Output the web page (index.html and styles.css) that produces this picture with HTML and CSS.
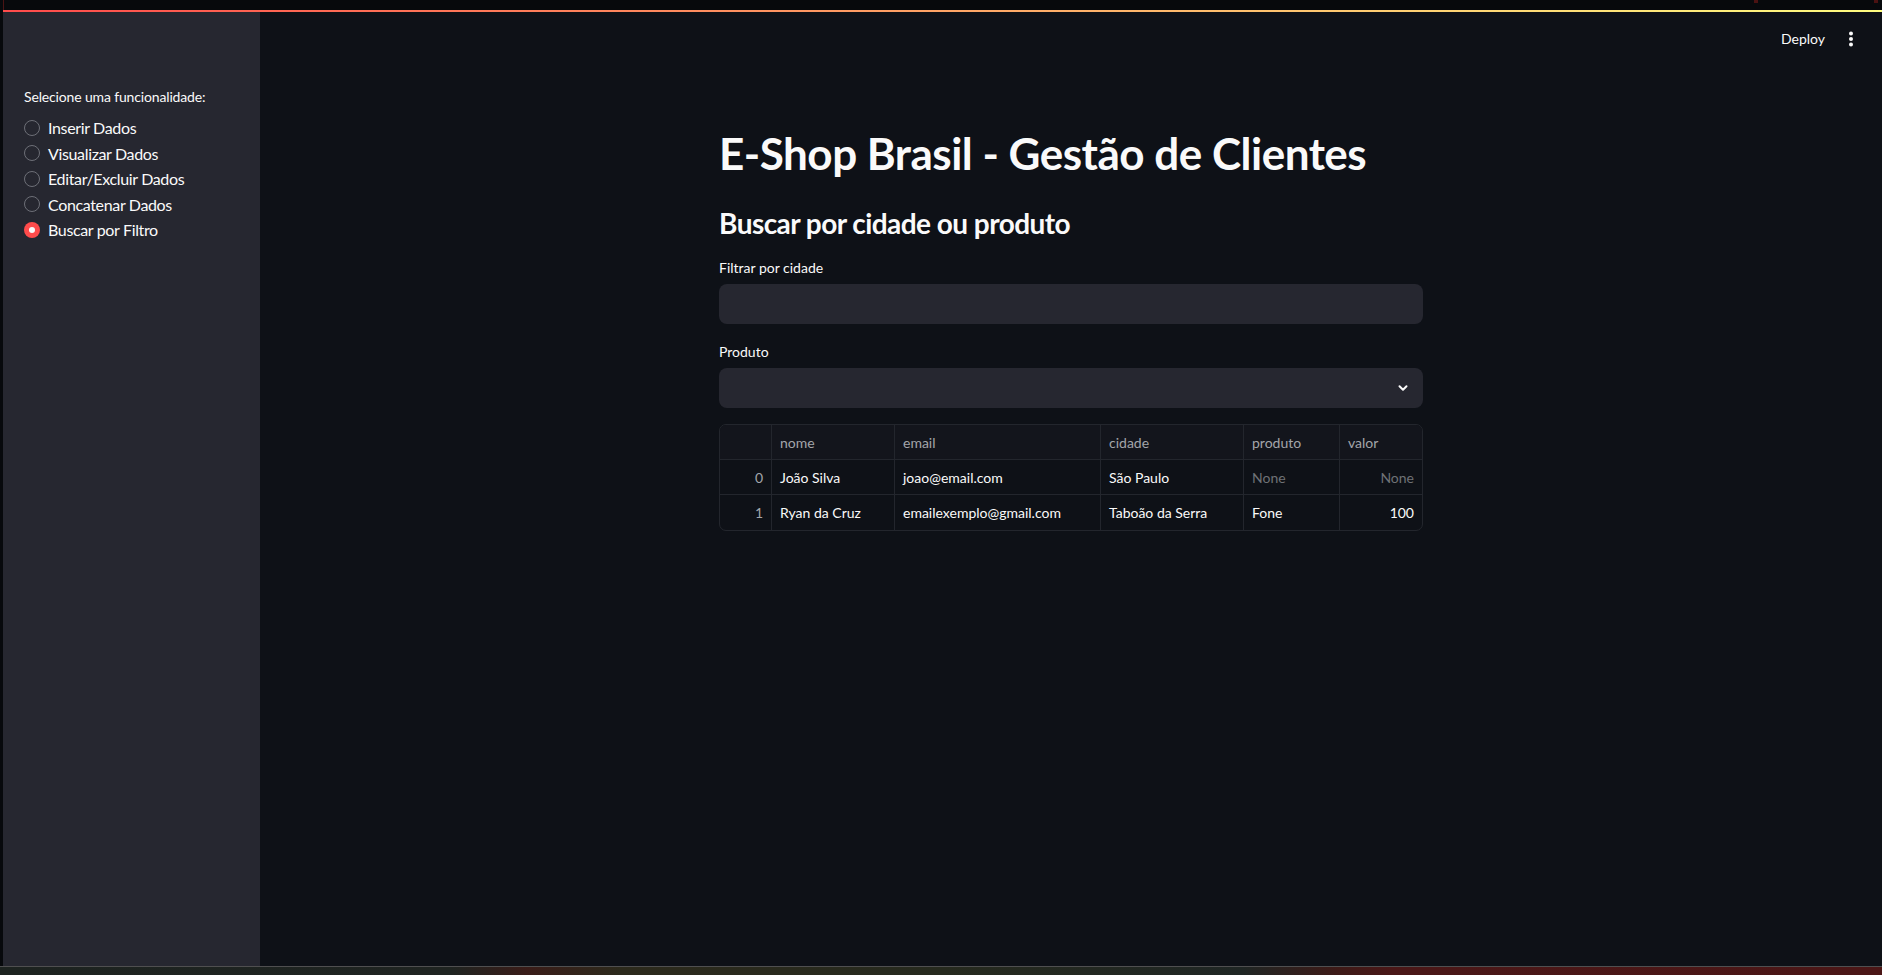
FILE: index.html
```html
<!DOCTYPE html>
<html lang="pt-BR">
<head>
<meta charset="utf-8">
<title>E-Shop Brasil - Gestão de Clientes</title>
<link rel="stylesheet" href="styles.css">
</head>
<body>
<div class="screen">
  <div class="topstrip">
    <span class="mark mark-edge"></span>
    <span class="mark mark-a"></span>
    <span class="mark mark-b"></span>
  </div>
  <div class="window">
    <div class="edge"></div>
    <div class="app">
      <div class="decoration"></div>
      <div class="appbody">
        <aside class="sidebar">
          <div class="sb-label">Selecione uma funcionalidade:</div>
          <div class="radio-group">
            <div class="radio"><span class="dot"></span><span>Inserir Dados</span></div>
            <div class="radio"><span class="dot"></span><span>Visualizar Dados</span></div>
            <div class="radio"><span class="dot"></span><span>Editar/Excluir Dados</span></div>
            <div class="radio"><span class="dot"></span><span>Concatenar Dados</span></div>
            <div class="radio selected"><span class="dot"></span><span>Buscar por Filtro</span></div>
          </div>
        </aside>
        <main class="main">
          <header class="topbar">
            <span class="deploy">Deploy</span>
            <span class="kebab">
              <svg width="24" height="24" viewBox="0 0 24 24"><circle cx="12" cy="6.5" r="2" fill="#fafafa"/><circle cx="12" cy="12" r="2" fill="#fafafa"/><circle cx="12" cy="17.5" r="2" fill="#fafafa"/></svg>
            </span>
          </header>
          <div class="block">
            <h1 class="title">E-Shop Brasil - Gestão de Clientes</h1>
            <h3 class="subtitle">Buscar por cidade ou produto</h3>
            <div class="field">
              <div class="flabel">Filtrar por cidade</div>
              <div class="input"></div>
            </div>
            <div class="field">
              <div class="flabel">Produto</div>
              <div class="input select">
                <svg width="12" height="12" viewBox="0 0 12 12"><polyline points="2.5,4.2 6,7.7 9.5,4.2" fill="none" stroke="#fafafa" stroke-width="2" stroke-linecap="round" stroke-linejoin="round"/></svg>
              </div>
            </div>
            <div class="table">
              <div class="cell head"></div>
              <div class="cell head">nome</div>
              <div class="cell head">email</div>
              <div class="cell head">cidade</div>
              <div class="cell head">produto</div>
              <div class="cell head last">valor</div>

              <div class="cell idx">0</div>
              <div class="cell">João Silva</div>
              <div class="cell">joao@email.com</div>
              <div class="cell">São Paulo</div>
              <div class="cell none">None</div>
              <div class="cell none num last">None</div>

              <div class="cell idx lastrow">1</div>
              <div class="cell lastrow">Ryan da Cruz</div>
              <div class="cell lastrow">emailexemplo@gmail.com</div>
              <div class="cell lastrow">Taboão da Serra</div>
              <div class="cell lastrow">Fone</div>
              <div class="cell num last lastrow">100</div>
            </div>
          </div>
        </main>
      </div>
    </div>
  </div>
  <div class="taskbar"></div>
</div>
</body>
</html>
```
FILE: styles.css
```css
html, body {
  margin: 0;
  padding: 0;
  background: #07090c;
}
body {
  font-family: "Lato", "Noto Sans", "Liberation Sans", sans-serif;
  color: #fafafa;
}
.screen {
  width: 1882px;
  height: 975px;
  display: flex;
  flex-direction: column;
  overflow: hidden;
}
.topstrip {
  height: 10px;
  flex: none;
  display: flex;
  background: #07090c;
}
.mark {
  display: block;
  height: 3px;
  background: #4a1212;
}
.mark-edge {
  width: 1px;
  height: 10px;
  margin-left: 3px;
  background: #4a1414;
}
.mark-a {
  width: 4px;
  margin-left: 1750px;
}
.mark-b {
  width: 4px;
  margin-left: 116px;
}
.window {
  flex: 1;
  display: flex;
  min-height: 0;
}
.edge {
  width: 3px;
  flex: none;
  background: #07090c;
}
.app {
  flex: 1;
  display: flex;
  flex-direction: column;
  min-width: 0;
}
.decoration {
  height: 2px;
  flex: none;
  background: linear-gradient(90deg, #ff4b4b, #fffd80);
}
.appbody {
  flex: 1;
  display: flex;
  min-height: 0;
}
.sidebar {
  width: 257px;
  flex: none;
  background: #262730;
  padding: 73px 0 0 21px;
  box-sizing: border-box;
}
.sb-label {
  font-size: 14px;
  line-height: 24px;
  height: 24px;
  margin-bottom: 6px;
  letter-spacing: -0.15px;
}
.radio-group {
  display: flex;
  flex-direction: column;
}
.radio {
  display: flex;
  align-items: center;
  gap: 8px;
  height: 25.5px;
  font-size: 16px;
  letter-spacing: -0.35px;
}
.dot {
  width: 16px;
  height: 16px;
  box-sizing: border-box;
  border-radius: 50%;
  border: 1.5px solid #6d6f77;
  flex: none;
  display: flex;
  align-items: center;
  justify-content: center;
}
.radio.selected .dot {
  border: none;
  background: #ff4b4b;
}
.radio.selected .dot::after {
  content: "";
  width: 6px;
  height: 6px;
  border-radius: 50%;
  background: #fafafa;
}
.main {
  flex: 1;
  min-width: 0;
  background: #0e1117;
  display: flex;
  flex-direction: column;
}
.topbar {
  height: 53px;
  flex: none;
  display: flex;
  align-items: center;
  justify-content: flex-end;
  padding-right: 19px;
  gap: 14px;
}
.deploy {
  font-size: 14px;
  color: #fafafa;
}
.kebab {
  width: 24px;
  height: 24px;
  display: flex;
}
.block {
  width: 704px;
  margin: 0 auto;
  padding-top: 62px;
  display: flex;
  flex-direction: column;
}
.title {
  margin: 0;
  font-size: 44px;
  line-height: 52px;
  font-weight: 700;
  letter-spacing: -0.5px;
}
.subtitle {
  margin: 27px 0 0;
  font-size: 28px;
  line-height: 34px;
  font-weight: 700;
  letter-spacing: -0.55px;
}
.field {
  margin-top: 16px;
  display: flex;
  flex-direction: column;
}
.flabel {
  font-size: 14px;
  line-height: 24px;
  height: 24px;
  margin-bottom: 4px;
}
.input {
  height: 40px;
  border-radius: 8px;
  background: #262730;
}
.select {
  display: flex;
  align-items: center;
  justify-content: flex-end;
  padding-right: 14px;
}
.table {
  margin-top: 16px;
  display: grid;
  grid-template-columns: 52px 123px 206px 143px 96px 1fr;
  border: 1px solid #23262d;
  border-radius: 7px;
  overflow: hidden;
  font-size: 14px;
}
.cell {
  height: 35px;
  box-sizing: border-box;
  padding: 0 8px;
  display: flex;
  align-items: center;
  border-right: 1px solid #23262d;
  border-bottom: 1px solid #23262d;
  white-space: nowrap;
  color: #fafafa;
}
.cell.last {
  border-right: none;
}
.cell.lastrow {
  border-bottom: none;
}
.cell.head {
  color: #a3a5aa;
  background: #13151c;
}
.cell.idx {
  justify-content: flex-end;
  color: #a3a5aa;
}
.cell.num {
  justify-content: flex-end;
}
.cell.none {
  color: #6f7176;
}
.taskbar {
  height: 9px;
  flex: none;
  box-sizing: border-box;
  border-top: 1px solid #4f4f50;
  background: linear-gradient(90deg, #1d2320 0%, #1f2421 24%, #3a1c18 28%, #2c2a1c 33%, #262a1e 50%, #1f2624 66%, #3d1a17 71%, #4a1717 74%, #4b1616 100%);
}
```
